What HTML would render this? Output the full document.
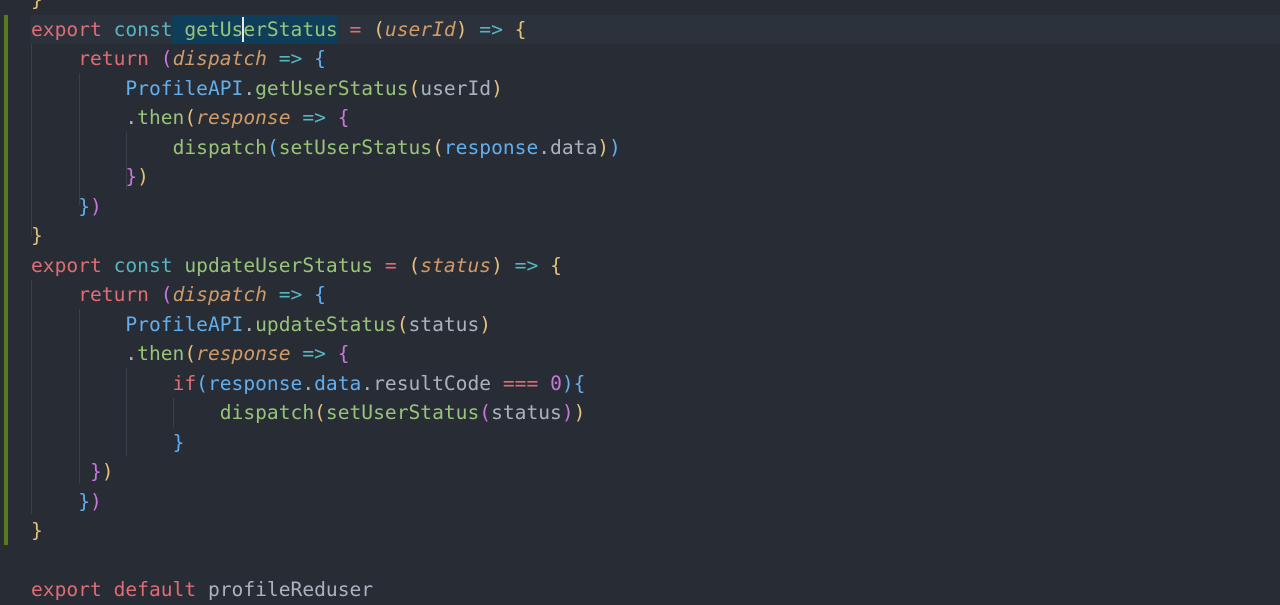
<!DOCTYPE html><html><head><style>
body{margin:0;width:1280px;height:600px;overflow:hidden;background:#282c34;position:relative}
pre{position:absolute;left:31px;top:-15px;margin:0;font-family:"DejaVu Sans Mono","Liberation Mono",monospace;font-size:19.6px;line-height:29.5px;color:#abb2bf;white-space:pre}
.r{color:#e06c75}.c{color:#56b6c2}.g{color:#98c379}.o{color:#d19a66;font-style:italic}.b{color:#61afef}.y{color:#e5c07b}.p{color:#c678dd}
.hl{position:absolute;left:30px;top:15px;width:1250px;height:29px;background:#2c323c}
.sel{position:absolute;left:172px;top:15px;width:165px;height:29px;background:#0f3e5a}
.cur{position:absolute;left:242px;top:17px;width:2px;height:25px;background:#e8e8e8}
.gut{position:absolute;left:4px;top:15px;width:4px;height:530px;background:#5b7a1c}
.ig{position:absolute;width:1px;background:#3a3f4a}
</style></head><body>
<div class="hl"></div><div class="sel"></div><div class="gut"></div>
<div class="ig" style="left:31px;top:44px;height:192px"></div>
<div class="ig" style="left:79px;top:73px;height:132px"></div>
<div class="ig" style="left:126px;top:132px;height:58px"></div>
<div class="ig" style="left:31px;top:280px;height:234px"></div>
<div class="ig" style="left:79px;top:309px;height:175px"></div>
<div class="ig" style="left:126px;top:368px;height:88px"></div>
<div class="ig" style="left:173px;top:398px;height:30px"></div>
<pre><span class="y">}</span>
<span class="r">export</span> <span class="c">const</span> <span class="g">getUserStatus</span> <span class="r">=</span> <span class="y">(</span><span class="o">userId</span><span class="y">)</span> <span class="c">=&gt;</span> <span class="y">{</span>
    <span class="r">return</span> <span class="p">(</span><span class="o">dispatch</span> <span class="c">=&gt;</span> <span class="b">{</span>
        <span class="b">ProfileAPI</span>.<span class="g">getUserStatus</span><span class="y">(</span>userId<span class="y">)</span>
        .<span class="g">then</span><span class="y">(</span><span class="o">response</span> <span class="c">=&gt;</span> <span class="p">{</span>
            <span class="g">dispatch</span><span class="b">(</span><span class="g">setUserStatus</span><span class="y">(</span><span class="b">response</span>.data<span class="y">)</span><span class="b">)</span>
        <span class="p">}</span><span class="y">)</span>
    <span class="b">}</span><span class="p">)</span>
<span class="y">}</span>
<span class="r">export</span> <span class="c">const</span> <span class="g">updateUserStatus</span> <span class="r">=</span> <span class="y">(</span><span class="o">status</span><span class="y">)</span> <span class="c">=&gt;</span> <span class="y">{</span>
    <span class="r">return</span> <span class="p">(</span><span class="o">dispatch</span> <span class="c">=&gt;</span> <span class="b">{</span>
        <span class="b">ProfileAPI</span>.<span class="g">updateStatus</span><span class="y">(</span>status<span class="y">)</span>
        .<span class="g">then</span><span class="y">(</span><span class="o">response</span> <span class="c">=&gt;</span> <span class="p">{</span>
            <span class="r">if</span><span class="b">(response</span>.<span class="b">data</span>.resultCode <span class="r">===</span> <span class="p">0</span><span class="b">){</span>
                <span class="g">dispatch</span><span class="y">(</span><span class="g">setUserStatus</span><span class="p">(</span>status<span class="p">)</span><span class="y">)</span>
            <span class="b">}</span>
     <span class="p">}</span><span class="y">)</span>
    <span class="b">}</span><span class="p">)</span>
<span class="y">}</span>

<span class="r">export</span> <span class="r">default</span> profileReduser</pre>
<div class="cur"></div>
</body></html>
